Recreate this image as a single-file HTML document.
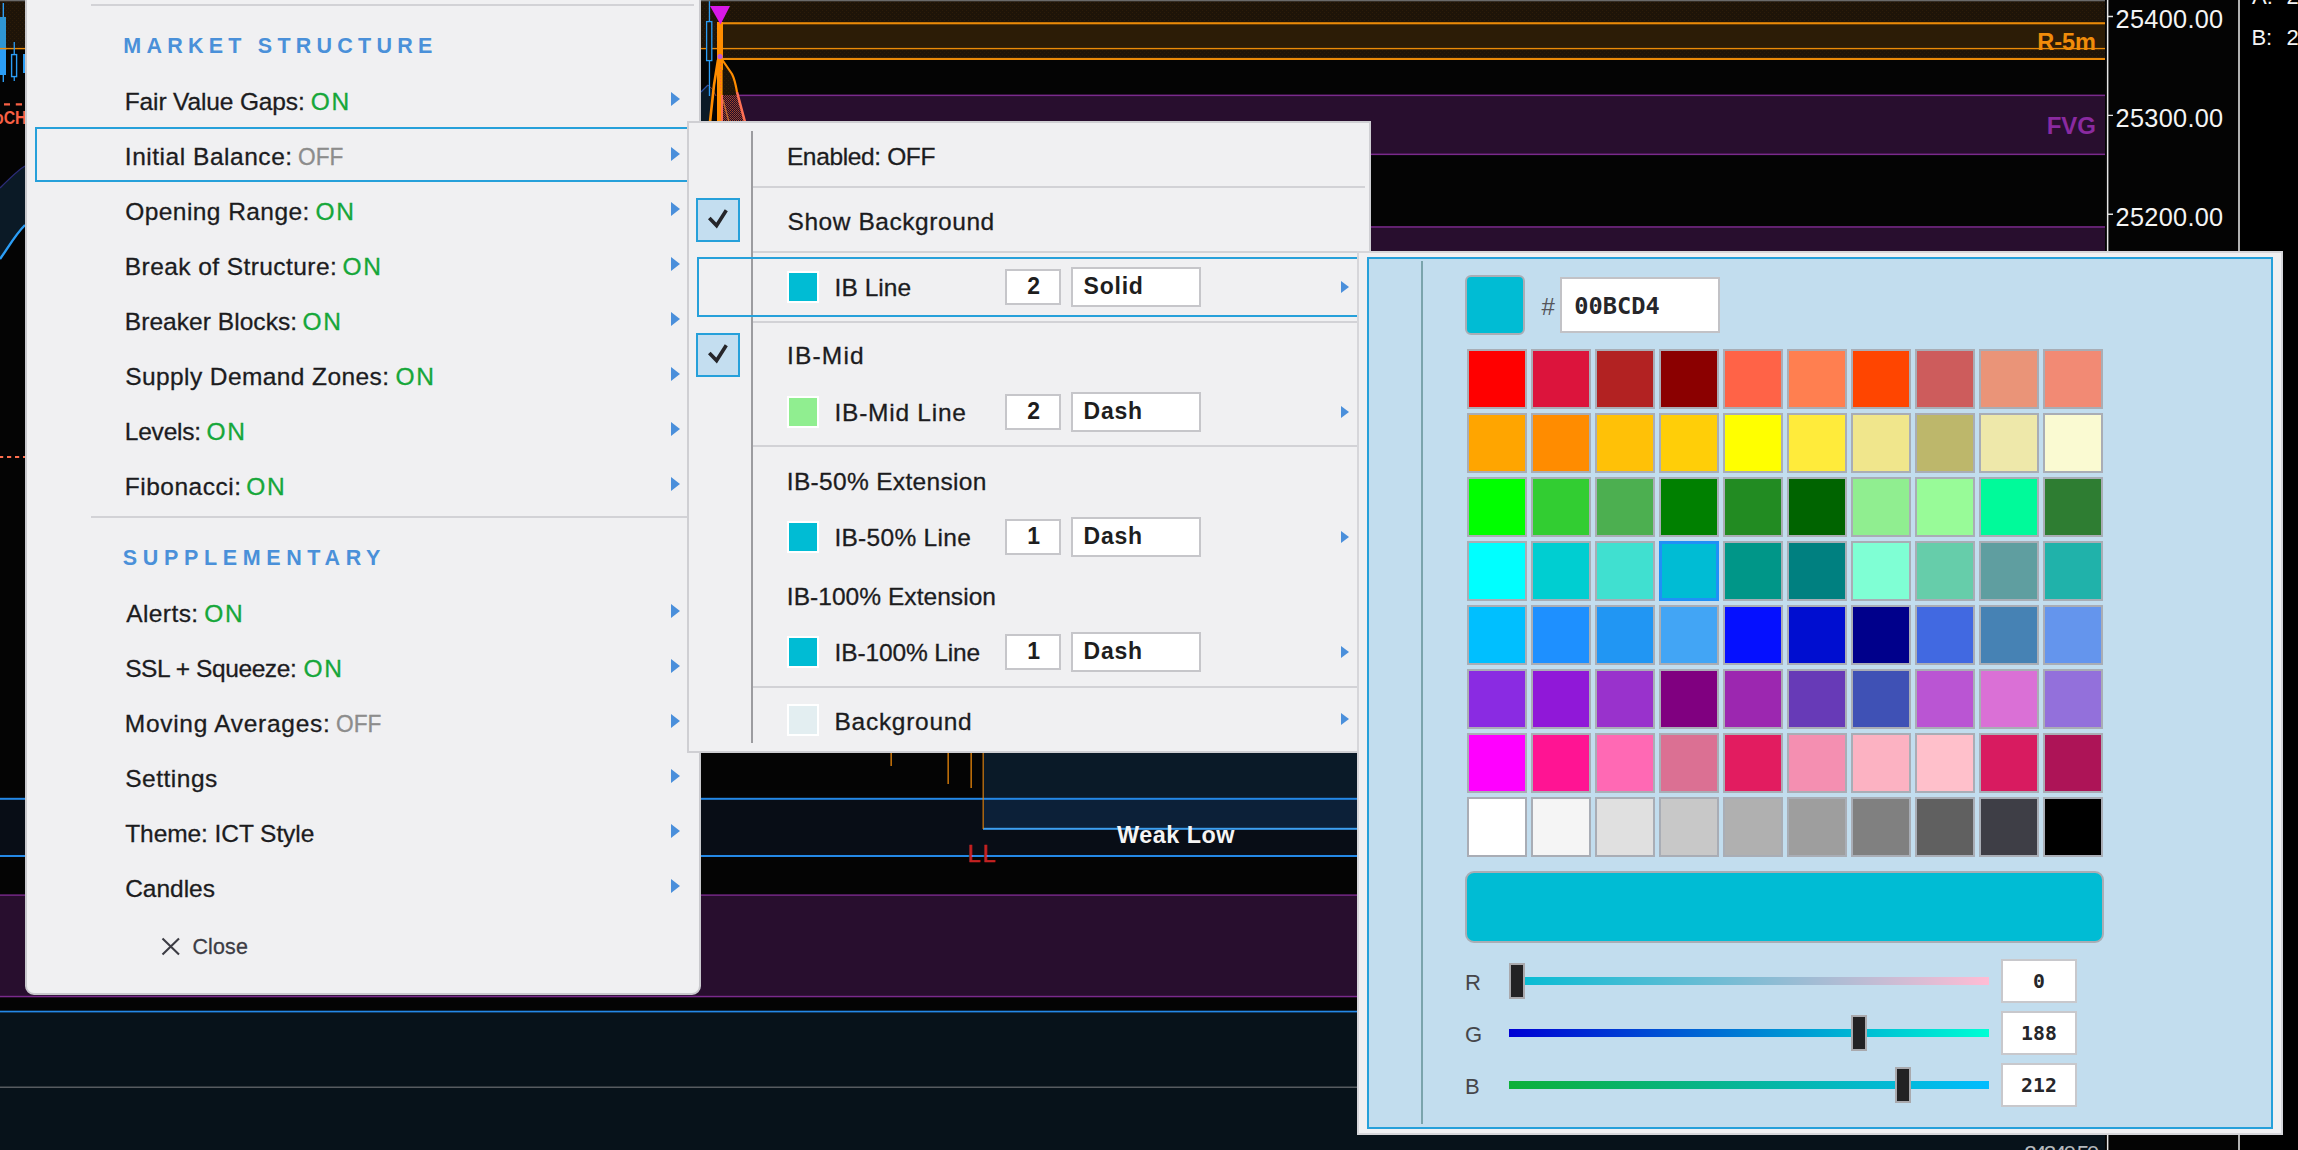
<!DOCTYPE html>
<html>
<head>
<meta charset="utf-8">
<title>Chart menu</title>
<style>
*{box-sizing:border-box;margin:0;padding:0}
html,body{width:2298px;height:1150px;overflow:hidden;background:#040404}
body{font-family:"Liberation Sans",sans-serif;color:#1e1e1e;position:relative}
.a{position:absolute}
#chart{position:absolute;left:0;top:0;width:2298px;height:1150px;background:#040404;overflow:hidden}
.hl{position:absolute;height:2px}
/* main menu */
#menu{position:absolute;left:25px;top:-20px;width:676px;height:1015px;background:#f0f0f2;border:2px solid #c9c9cd;border-radius:0 0 9px 9px}
.sep{position:absolute;height:2px;background:#d2d2d6}
.hd{position:absolute;left:123px;font-weight:bold;font-size:21.5px;letter-spacing:6.3px;color:#4a90d9;line-height:24px;white-space:nowrap}
.mi{position:absolute;left:125px;font-size:24.5px;line-height:30px;white-space:nowrap;color:#1c1c1e;-webkit-text-stroke:0.3px}
.on{color:#16a73a}
.off{color:#8c8c8c}
.ar{position:absolute;width:0;height:0;border-left:9px solid #4a8fdb;border-top:7px solid transparent;border-bottom:7px solid transparent}
.sel{position:absolute;border:2px solid #26a0da}
/* submenu */
#sub{position:absolute;left:687px;top:121px;width:684px;height:632px;background:#f0f0f2;border:2px solid #cfcfd3}
.chk{position:absolute;width:44px;height:44px;background:#c4def0;border:2px solid #26a0da}
.sw{position:absolute;width:32px;height:32px;border:2px solid #fff}
.nb{position:absolute;background:#fff;border:2px solid #c6c6ca;font-weight:bold;font-size:23px;line-height:33px;height:38px;color:#1e1e1e}
/* picker */
#pk{position:absolute;left:1357px;top:251px;width:926px;height:884px;background:#f0f0f2;border:2px solid #d6d6da}
#pki{position:absolute;left:1367px;top:257px;width:906px;height:872px;background:#c2ddee;border:2px solid #26a0da}
.c{position:absolute;width:60px;height:60px;border:2px solid #a9adb5}
.mono{font-family:"DejaVu Sans Mono","Liberation Mono",monospace;font-weight:bold}
.vb{position:absolute;background:#fff;border:2px solid #c8c8cc;text-align:center}
.th{position:absolute;width:15px;height:34px;background:#222224;border:2px solid #a9a9ad}
.tr{position:absolute;height:7px}
</style>
</head>
<body>
<div id="chart">
<!--CHART-S-->
<svg class="a" style="left:0;top:0" width="2298" height="1150" viewBox="0 0 2298 1150">
<defs>
<pattern id="dotb" width="4" height="4" patternUnits="userSpaceOnUse"><rect width="4" height="4" fill="#1e1408"/><rect x="0" y="0" width="1" height="1" fill="#2c1c09"/><rect x="2" y="2" width="1" height="1" fill="#2c1c09"/></pattern>
<pattern id="doto" width="3" height="3" patternUnits="userSpaceOnUse"><rect width="3" height="3" fill="#ff8c00"/><rect x="0" y="0" width="1" height="1" fill="#ff5a3c"/></pattern>
<pattern id="dotp" width="2" height="2" patternUnits="userSpaceOnUse"><rect width="2" height="2" fill="#1e0a2a"/><rect x="0" y="0" width="1" height="1" fill="#a2482c"/><rect x="1" y="1" width="1" height="1" fill="#8a3c2a"/></pattern>
</defs>
<!-- top brown zone -->
<rect x="0" y="0" width="2105" height="60" fill="url(#dotb)"/>
<rect x="0" y="49" width="723" height="12" fill="#040404"/>
<rect x="723" y="23" width="1382" height="25" fill="#2c1c06"/>
<rect x="723" y="22.2" width="1382" height="2.1" fill="#ea8a08"/>
<rect x="0" y="47.9" width="2105" height="1.4" fill="#ea8a08"/>
<rect x="723" y="57.9" width="1382" height="2.1" fill="#ea8a08"/>
<!-- purple FVG 1 -->
<rect x="722" y="95" width="1383" height="60" fill="#280e2e"/>
<rect x="722" y="94.6" width="1383" height="1.5" fill="#7a2a8c"/>
<rect x="700" y="153.6" width="1405" height="1.5" fill="#7a2a8c"/>
<!-- purple FVG 2 -->
<rect x="700" y="227" width="1405" height="30" fill="#280e2e"/>
<rect x="700" y="226.2" width="1405" height="1.5" fill="#7a2a8c"/>
<!-- lower area -->
<rect x="983" y="752" width="380" height="46" fill="#0a1a28"/>
<rect x="0" y="799" width="2105" height="57" fill="#080d16"/>
<rect x="983.6" y="799" width="380" height="29.5" fill="#0c2038"/>
<rect x="0" y="797.8" width="2105" height="2" fill="#2488e6"/>
<rect x="983" y="827.8" width="380" height="2" fill="#3d9ff0"/>
<rect x="0" y="855" width="2105" height="2" fill="#2488e6"/>
<rect x="982.6" y="752" width="1.1" height="77" fill="#e8860a"/>
<rect x="890.5" y="752" width="1.3" height="14" fill="#e8860a"/>
<rect x="947.5" y="752" width="1.3" height="32" fill="#e8860a"/>
<rect x="970.5" y="752" width="1.3" height="36" fill="#e8860a"/>
<!-- purple FVG 3 -->
<rect x="0" y="895" width="2105" height="101.5" fill="#280e2e"/>
<rect x="0" y="894.4" width="2105" height="1.4" fill="#7a2a8c"/>
<rect x="0" y="995.8" width="2105" height="1.5" fill="#7a2a8c"/>
<!-- bottom navy -->
<rect x="0" y="1011" width="2105" height="139" fill="#07121a"/>
<rect x="0" y="1010.7" width="2105" height="1.7" fill="#2488e6"/>
<rect x="0" y="1086.6" width="2105" height="1.2" fill="#6a6e72"/>
<!-- left strip -->
<rect x="2.6" y="3" width="1.4" height="79" fill="#2b9df5"/>
<rect x="0" y="17" width="6" height="58" fill="#2b9df5"/>
<rect x="0" y="17" width="6" height="31" fill="#2f96d4"/>
<rect x="0" y="47.9" width="7" height="1.4" fill="#ea8a08"/>
<rect x="13.6" y="42" width="1.3" height="39" fill="#2b9df5"/>
<rect x="11.6" y="54.6" width="5" height="22" fill="#040404" stroke="#2b9df5" stroke-width="1.4"/>
<rect x="23" y="54" width="3" height="19" fill="#2b9df5"/>
<path d="M0 188 C10 178 18 170 25 166 L25 225 C15 235 8 248 0 259 Z" fill="#0b1a26"/>
<path d="M0 188 C10 178 18 170 25 166" fill="none" stroke="#2c2c78" stroke-width="1.4"/>
<path d="M0 259 C8 248 15 235 25 225" fill="none" stroke="#2b9df5" stroke-width="2.4"/>
<path d="M4 104.4h6M15.8 104.4h6.2" stroke="#f86044" stroke-width="2.4"/>
<path d="M-1 457h27" stroke="#ff6e4e" stroke-width="2.2" stroke-dasharray="4.2 3.8"/>
<text x="-6" y="123.6" font-family="Liberation Sans, sans-serif" font-weight="bold" font-size="18" fill="#f86044" textLength="32.5" lengthAdjust="spacingAndGlyphs">oCH</text>
<!-- top marker near menu -->
<path d="M701 92 L708 85 L712 90 L712 122 L701 122 Z" fill="#0b1a26"/>
<path d="M701 92 L708 85" fill="none" stroke="#2a4fa0" stroke-width="1.2"/>
<path d="M708 85 Q713 88 716 96" fill="none" stroke="#7a3a4a" stroke-width="1"/>
<rect x="708.8" y="0" width="1.3" height="96" fill="#2b9df5"/>
<rect x="706.6" y="21.6" width="5.2" height="39" fill="#1a1208" stroke="#2b9df5" stroke-width="1.3"/>
<path d="M722 62 L733 76 L738 95 L722 95 Z" fill="url(#dotb)"/>
<path d="M723 95 L738 95 L745 122 L723 122 Z" fill="url(#dotp)"/>
<path d="M721 58 L732 74 Q735 80 737 92" fill="none" stroke="#ff8c00" stroke-width="2.2"/>
<path d="M737 92 L745 122" fill="none" stroke="#ff7055" stroke-width="2.6"/>
<path d="M718 60 L714 85 L710 122" fill="none" stroke="#ff8c00" stroke-width="2.6"/>
<path d="M723 100 L729 122" fill="none" stroke="#c06a30" stroke-width="1.4"/>
<rect x="717" y="22" width="6" height="48" fill="#ff8c00"/>
<rect x="717" y="70" width="4.2" height="52" fill="#ff8c00"/>
<rect x="719" y="62" width="3.6" height="33" fill="url(#doto)"/>
<rect x="721" y="95" width="2" height="27" fill="#ff7055"/>
<circle cx="720" cy="56.5" r="2.6" fill="#c05ad8"/>
<path d="M710 6 L730 6 L720.5 24.5 Z" fill="#d818e8"/>
<!-- labels -->
<text x="2096" y="50" text-anchor="end" font-family="Liberation Sans, sans-serif" font-weight="bold" font-size="23.5" fill="#f08c0a">R-5m</text>
<text x="2096" y="133.8" text-anchor="end" font-family="Liberation Sans, sans-serif" font-weight="bold" font-size="24" fill="#8a2aa0">FVG</text>
<text x="1117" y="842.6" font-family="Liberation Sans, sans-serif" font-weight="bold" font-size="23.4" fill="#f4f4f4" textLength="117.5">Weak Low</text>
<text x="967.6" y="862.4" font-family="Liberation Sans, sans-serif" font-size="23.5" fill="#c42222" stroke="#c42222" stroke-width="0.5" textLength="28">LL</text>
<!-- axis -->
<rect x="2105" y="0" width="193" height="1150" fill="#040404"/>
<rect x="2240" y="0" width="58" height="1150" fill="#000"/>
<rect x="0" y="0" width="2105" height="1.3" fill="#6a6a6a"/>
<rect x="2106.9" y="0" width="1.5" height="1150" fill="#e6e6e6"/>
<rect x="2238" y="0" width="2" height="1150" fill="#b2b2b2"/>
<path d="M2108 16.5h5M2108 115.4h5M2108 214.3h5" stroke="#e0e0e0" stroke-width="1.4"/>
<g font-family="Liberation Sans, sans-serif" font-size="25.3" fill="#f4f4f4">
<text x="2115.6" y="27.7" textLength="107.6">25400.00</text>
<text x="2115.6" y="126.6" textLength="107.6">25300.00</text>
<text x="2115.6" y="225.5" textLength="107.6">25200.00</text>
</g>
<g font-family="Liberation Sans, sans-serif" font-size="22" fill="#f4f4f4">
<text x="2252" y="4">A:</text>
<text x="2286.6" y="4">2</text>
<text x="2251.4" y="44.7">B:</text>
<text x="2286.6" y="44.7">2</text>
</g>
<text x="2024.2" y="1160.6" font-family="Liberation Sans, sans-serif" font-size="22.5" fill="#b4b8bc" textLength="75">24240.50</text>
</svg>
<!--CHART-E-->
</div>
<div id="menu"></div>
<!--MENU-S-->
<div class="sep" style="left:91px;top:4px;width:603px"></div>
<div class="hd" style="left:123.3px;top:34.2px;letter-spacing:5.23px">MARKET STRUCTURE</div>
<div class="sel" style="left:35px;top:127px;width:656px;height:55px"></div>
<div class="mi" style="left:124.8px;top:87.0px;letter-spacing:-0.14px">Fair Value Gaps:</div><div class="mi on" style="left:310.7px;top:87.0px;letter-spacing:1.70px">ON</div>
<div class="ar" style="left:670.5px;top:92.0px"></div>
<div class="mi" style="left:124.8px;top:142.0px;letter-spacing:0.53px">Initial Balance:</div><div class="mi off" style="left:297.8px;top:142.0px;transform:scaleX(0.926);transform-origin:0 0">OFF</div>
<div class="ar" style="left:670.5px;top:147.0px"></div>
<div class="mi" style="left:125.2px;top:197.0px;letter-spacing:0.44px">Opening Range:</div><div class="mi on" style="left:315.5px;top:197.0px;letter-spacing:1.70px">ON</div>
<div class="ar" style="left:670.5px;top:202.0px"></div>
<div class="mi" style="left:124.8px;top:252.0px;letter-spacing:0.43px">Break of Structure:</div><div class="mi on" style="left:342.5px;top:252.0px;letter-spacing:1.70px">ON</div>
<div class="ar" style="left:670.5px;top:257.0px"></div>
<div class="mi" style="left:124.8px;top:307.0px;letter-spacing:0.05px">Breaker Blocks:</div><div class="mi on" style="left:302.5px;top:307.0px;letter-spacing:1.70px">ON</div>
<div class="ar" style="left:670.5px;top:312.0px"></div>
<div class="mi" style="left:125.2px;top:362.0px;letter-spacing:0.41px">Supply Demand Zones:</div><div class="mi on" style="left:395.5px;top:362.0px;letter-spacing:1.70px">ON</div>
<div class="ar" style="left:670.5px;top:367.0px"></div>
<div class="mi" style="left:124.8px;top:417.0px;letter-spacing:-0.22px">Levels:</div><div class="mi on" style="left:206.5px;top:417.0px;letter-spacing:1.70px">ON</div>
<div class="ar" style="left:670.5px;top:422.0px"></div>
<div class="mi" style="left:124.8px;top:472.0px;letter-spacing:0.50px">Fibonacci:</div><div class="mi on" style="left:246.3px;top:472.0px;letter-spacing:1.70px">ON</div>
<div class="ar" style="left:670.5px;top:477.0px"></div>
<div class="sep" style="left:91px;top:516px;width:597px"></div>
<div class="hd" style="left:122.8px;top:545.8px;letter-spacing:5.64px">SUPPLEMENTARY</div>
<div class="mi" style="left:126.2px;top:599.0px;letter-spacing:0.42px">Alerts:</div><div class="mi on" style="left:204.3px;top:599.0px;letter-spacing:1.70px">ON</div>
<div class="ar" style="left:670.5px;top:604.0px"></div>
<div class="mi" style="left:125.2px;top:654.0px;letter-spacing:-0.41px">SSL + Squeeze:</div><div class="mi on" style="left:303.5px;top:654.0px;letter-spacing:1.70px">ON</div>
<div class="ar" style="left:670.5px;top:659.0px"></div>
<div class="mi" style="left:124.8px;top:709.0px;letter-spacing:0.71px">Moving Averages:</div><div class="mi off" style="left:335.6px;top:709.0px;transform:scaleX(0.926);transform-origin:0 0">OFF</div>
<div class="ar" style="left:670.5px;top:714.0px"></div>
<div class="mi" style="left:125.2px;top:764.0px;letter-spacing:0.51px">Settings</div>
<div class="ar" style="left:670.5px;top:769.0px"></div>
<div class="mi" style="left:125.2px;top:819.0px;letter-spacing:-0.07px">Theme: ICT Style</div>
<div class="ar" style="left:670.5px;top:824.0px"></div>
<div class="mi" style="left:125.2px;top:874.0px;letter-spacing:-0.02px">Candles</div>
<div class="ar" style="left:670.5px;top:879.0px"></div>
<svg class="a" style="left:160px;top:935px" width="22" height="22" viewBox="0 0 22 22"><path d="M2.5 3.5L19 19.5M19 3.5L2.5 19.5" stroke="#3c3c44" stroke-width="2.1" fill="none"/></svg>
<div class="a" style="left:192.4px;top:933px;font-size:21.4px;line-height:28px;color:#3c3c44;letter-spacing:0.2px;-webkit-text-stroke:0.3px">Close</div>
<!--MENU-E-->
<div id="sub"></div>
<!--SUB-S-->
<div class="a" style="left:751.3px;top:131px;width:1.8px;height:612px;background:#9c9ca0"></div>
<div class="sep" style="left:753px;top:186.0px;width:612px;height:2px"></div>
<div class="sep" style="left:753px;top:251.0px;width:605px;height:2px"></div>
<div class="sep" style="left:753px;top:321.0px;width:605px;height:2px"></div>
<div class="sep" style="left:753px;top:445.0px;width:605px;height:2px"></div>
<div class="sep" style="left:753px;top:686.0px;width:605px;height:2px"></div>
<div class="sel" style="left:697.2px;top:256.9px;width:670px;height:60px;border-width:2px"></div>
<div class="mi" style="font-size:24.5px;left:786.9px;top:141.6px;letter-spacing:-0.36px">Enabled: OFF</div>
<div class="mi" style="font-size:24.5px;left:787.5px;top:206.5px;letter-spacing:0.56px">Show Background</div>
<div class="mi" style="font-size:24.5px;left:834.5px;top:273.2px;letter-spacing:0.07px">IB Line</div>
<div class="mi" style="font-size:24.5px;left:786.9px;top:341.2px;letter-spacing:1.20px">IB-Mid</div>
<div class="mi" style="font-size:24.5px;left:834.5px;top:398.1px;letter-spacing:0.75px">IB-Mid Line</div>
<div class="mi" style="font-size:24.5px;left:786.8px;top:466.7px;letter-spacing:0.32px">IB-50% Extension</div>
<div class="mi" style="font-size:24.5px;left:834.4px;top:523.1px;letter-spacing:0.29px">IB-50% Line</div>
<div class="mi" style="font-size:24.5px;left:786.8px;top:581.5px;letter-spacing:0.05px">IB-100% Extension</div>
<div class="mi" style="font-size:24.5px;left:834.5px;top:638.2px;letter-spacing:-0.13px">IB-100% Line</div>
<div class="mi" style="font-size:24.5px;left:834.5px;top:706.5px;letter-spacing:0.72px">Background</div>
<div class="chk" style="left:696px;top:198.0px"></div>
<svg class="a" style="left:696px;top:198.0px" width="44" height="44" viewBox="0 0 44 44"><path d="M13.3 19.9L20.6 27.5L30.3 12.3" fill="none" stroke="#26262a" stroke-width="3.6" stroke-linejoin="miter"/></svg>
<div class="chk" style="left:696px;top:333.2px"></div>
<svg class="a" style="left:696px;top:333.2px" width="44" height="44" viewBox="0 0 44 44"><path d="M13.3 19.9L20.6 27.5L30.3 12.3" fill="none" stroke="#26262a" stroke-width="3.6" stroke-linejoin="miter"/></svg>
<div class="sw" style="left:786.8px;top:271.0px;background:#00bcd4"></div>
<div class="nb" style="left:1005px;top:269.0px;width:56px;height:36px;line-height:31.6px;text-align:center;padding-left:1.5px">2</div>
<div class="nb" style="left:1071px;top:267.0px;width:130px;height:39.5px;line-height:35.5px;padding-left:10.5px;letter-spacing:0.8px">Solid</div>
<div class="ar" style="left:1341px;top:280.5px;border-left-width:8.5px;border-top-width:6.5px;border-bottom-width:6.5px"></div>
<div class="sw" style="left:786.8px;top:396.0px;background:#90ee90"></div>
<div class="nb" style="left:1005px;top:394.0px;width:56px;height:36px;line-height:31.6px;text-align:center;padding-left:1.5px">2</div>
<div class="nb" style="left:1071px;top:392.0px;width:130px;height:39.5px;line-height:35.5px;padding-left:10.5px;letter-spacing:0.8px">Dash</div>
<div class="ar" style="left:1341px;top:405.5px;border-left-width:8.5px;border-top-width:6.5px;border-bottom-width:6.5px"></div>
<div class="sw" style="left:786.8px;top:521.0px;background:#00bcd4"></div>
<div class="nb" style="left:1005px;top:519.0px;width:56px;height:36px;line-height:31.6px;text-align:center;padding-left:1.5px">1</div>
<div class="nb" style="left:1071px;top:517.0px;width:130px;height:39.5px;line-height:35.5px;padding-left:10.5px;letter-spacing:0.8px">Dash</div>
<div class="ar" style="left:1341px;top:530.5px;border-left-width:8.5px;border-top-width:6.5px;border-bottom-width:6.5px"></div>
<div class="sw" style="left:786.8px;top:636.0px;background:#00bcd4"></div>
<div class="nb" style="left:1005px;top:634.0px;width:56px;height:36px;line-height:31.6px;text-align:center;padding-left:1.5px">1</div>
<div class="nb" style="left:1071px;top:632.0px;width:130px;height:39.5px;line-height:35.5px;padding-left:10.5px;letter-spacing:0.8px">Dash</div>
<div class="ar" style="left:1341px;top:645.5px;border-left-width:8.5px;border-top-width:6.5px;border-bottom-width:6.5px"></div>
<div class="sw" style="left:786.8px;top:704.2px;background:#e3eef1"></div>
<div class="ar" style="left:1341px;top:712.5px;border-left-width:8.5px;border-top-width:6.5px;border-bottom-width:6.5px"></div>
<!--SUB-E-->
<div id="pk"></div>
<div id="pki"></div>
<!--PICKER-S-->
<div class="a" style="left:1421.2px;top:261px;width:1.5px;height:863px;background:#7aa4ac"></div>
<div class="a" style="left:1465px;top:275px;width:60px;height:60px;background:#00bcd4;border:2px solid #a9adb5;border-radius:6px"></div>
<div class="a" style="left:1541.5px;top:292.5px;font-size:24px;line-height:28px;color:#55555a">#</div>
<div class="a mono" style="left:1560px;top:277.2px;width:159.5px;height:55.5px;background:#fff;border:2px solid #c2c2c6;font-size:23.7px;line-height:55.4px;padding-left:12.2px;color:#26262a">00BCD4</div>
<div class="c" style="left:1467px;top:349px;background:#ff0000"></div>
<div class="c" style="left:1531px;top:349px;background:#dc143c"></div>
<div class="c" style="left:1595px;top:349px;background:#b22222"></div>
<div class="c" style="left:1659px;top:349px;background:#8b0000"></div>
<div class="c" style="left:1723px;top:349px;background:#ff6347"></div>
<div class="c" style="left:1787px;top:349px;background:#ff7f50"></div>
<div class="c" style="left:1851px;top:349px;background:#ff4500"></div>
<div class="c" style="left:1915px;top:349px;background:#cd5c5c"></div>
<div class="c" style="left:1979px;top:349px;background:#ea9478"></div>
<div class="c" style="left:2043px;top:349px;background:#f28a74"></div>
<div class="c" style="left:1467px;top:413px;background:#ffa500"></div>
<div class="c" style="left:1531px;top:413px;background:#ff8c00"></div>
<div class="c" style="left:1595px;top:413px;background:#ffc107"></div>
<div class="c" style="left:1659px;top:413px;background:#ffce08"></div>
<div class="c" style="left:1723px;top:413px;background:#ffff00"></div>
<div class="c" style="left:1787px;top:413px;background:#ffeb3b"></div>
<div class="c" style="left:1851px;top:413px;background:#f0e68c"></div>
<div class="c" style="left:1915px;top:413px;background:#bdb76b"></div>
<div class="c" style="left:1979px;top:413px;background:#eee8aa"></div>
<div class="c" style="left:2043px;top:413px;background:#fafad2"></div>
<div class="c" style="left:1467px;top:477px;background:#00ff00"></div>
<div class="c" style="left:1531px;top:477px;background:#32cd32"></div>
<div class="c" style="left:1595px;top:477px;background:#4caf50"></div>
<div class="c" style="left:1659px;top:477px;background:#008000"></div>
<div class="c" style="left:1723px;top:477px;background:#228b22"></div>
<div class="c" style="left:1787px;top:477px;background:#006400"></div>
<div class="c" style="left:1851px;top:477px;background:#90ee90"></div>
<div class="c" style="left:1915px;top:477px;background:#98fb98"></div>
<div class="c" style="left:1979px;top:477px;background:#00fa9a"></div>
<div class="c" style="left:2043px;top:477px;background:#2e7d32"></div>
<div class="c" style="left:1467px;top:541px;background:#00ffff"></div>
<div class="c" style="left:1531px;top:541px;background:#00ced1"></div>
<div class="c" style="left:1595px;top:541px;background:#40e0d0"></div>
<div class="c" style="left:1659px;top:541px;background:#00bcd4;border:3px solid #2090f6"></div>
<div class="c" style="left:1723px;top:541px;background:#009688"></div>
<div class="c" style="left:1787px;top:541px;background:#008080"></div>
<div class="c" style="left:1851px;top:541px;background:#7fffd4"></div>
<div class="c" style="left:1915px;top:541px;background:#66cdaa"></div>
<div class="c" style="left:1979px;top:541px;background:#5f9ea0"></div>
<div class="c" style="left:2043px;top:541px;background:#20b2aa"></div>
<div class="c" style="left:1467px;top:605px;background:#00bfff"></div>
<div class="c" style="left:1531px;top:605px;background:#1e90ff"></div>
<div class="c" style="left:1595px;top:605px;background:#2196f3"></div>
<div class="c" style="left:1659px;top:605px;background:#42a5f5"></div>
<div class="c" style="left:1723px;top:605px;background:#0510ff"></div>
<div class="c" style="left:1787px;top:605px;background:#000ed0"></div>
<div class="c" style="left:1851px;top:605px;background:#00008b"></div>
<div class="c" style="left:1915px;top:605px;background:#4169e1"></div>
<div class="c" style="left:1979px;top:605px;background:#4682b4"></div>
<div class="c" style="left:2043px;top:605px;background:#6495ed"></div>
<div class="c" style="left:1467px;top:669px;background:#8a2be2"></div>
<div class="c" style="left:1531px;top:669px;background:#9018d8"></div>
<div class="c" style="left:1595px;top:669px;background:#9932cc"></div>
<div class="c" style="left:1659px;top:669px;background:#800080"></div>
<div class="c" style="left:1723px;top:669px;background:#9c27b0"></div>
<div class="c" style="left:1787px;top:669px;background:#673ab7"></div>
<div class="c" style="left:1851px;top:669px;background:#3f51b5"></div>
<div class="c" style="left:1915px;top:669px;background:#ba55d3"></div>
<div class="c" style="left:1979px;top:669px;background:#da70d6"></div>
<div class="c" style="left:2043px;top:669px;background:#9370db"></div>
<div class="c" style="left:1467px;top:733px;background:#ff00ff"></div>
<div class="c" style="left:1531px;top:733px;background:#ff1493"></div>
<div class="c" style="left:1595px;top:733px;background:#ff69b4"></div>
<div class="c" style="left:1659px;top:733px;background:#db7093"></div>
<div class="c" style="left:1723px;top:733px;background:#e21c60"></div>
<div class="c" style="left:1787px;top:733px;background:#f48fb1"></div>
<div class="c" style="left:1851px;top:733px;background:#fcb2c2"></div>
<div class="c" style="left:1915px;top:733px;background:#ffc0cb"></div>
<div class="c" style="left:1979px;top:733px;background:#d81b60"></div>
<div class="c" style="left:2043px;top:733px;background:#ad1457"></div>
<div class="c" style="left:1467px;top:797px;background:#ffffff"></div>
<div class="c" style="left:1531px;top:797px;background:#f5f5f5"></div>
<div class="c" style="left:1595px;top:797px;background:#e0e0e0"></div>
<div class="c" style="left:1659px;top:797px;background:#c8c8c8"></div>
<div class="c" style="left:1723px;top:797px;background:#b0b0b0"></div>
<div class="c" style="left:1787px;top:797px;background:#9e9e9e"></div>
<div class="c" style="left:1851px;top:797px;background:#808080"></div>
<div class="c" style="left:1915px;top:797px;background:#606060"></div>
<div class="c" style="left:1979px;top:797px;background:#3e3e46"></div>
<div class="c" style="left:2043px;top:797px;background:#000000"></div>
<div class="a" style="left:1465px;top:871px;width:639px;height:72px;background:#00bcd4;border:2px solid #a9adb5;border-radius:9px"></div>
<div class="a" style="left:1465px;top:968.6px;font-size:22px;line-height:28px;color:#46464a">R</div>
<div class="tr" style="left:1509px;top:977.0px;width:480px;height:8px;background:linear-gradient(90deg,#00bcd4,#ffbcd4)"></div>
<div class="th" style="left:1509.0px;top:963.1px;width:16px;height:35.6px"></div>
<div class="vb mono" style="left:2001.2px;top:959.2px;width:75.5px;height:43.5px;font-size:19.8px;line-height:42.5px;color:#26262a">0</div>
<div class="a" style="left:1465px;top:1020.6px;font-size:22px;line-height:28px;color:#46464a">G</div>
<div class="tr" style="left:1509px;top:1029.0px;width:480px;height:8px;background:linear-gradient(90deg,#0000d4,#00ffd4)"></div>
<div class="th" style="left:1851.1px;top:1015.1px;width:16px;height:35.6px"></div>
<div class="vb mono" style="left:2001.2px;top:1011.2px;width:75.5px;height:43.5px;font-size:19.8px;line-height:42.5px;color:#26262a">188</div>
<div class="a" style="left:1465px;top:1072.6px;font-size:22px;line-height:28px;color:#46464a">B</div>
<div class="tr" style="left:1509px;top:1081.0px;width:480px;height:8px;background:linear-gradient(90deg,#0cb038,#00bcff)"></div>
<div class="th" style="left:1894.8px;top:1067.1px;width:16px;height:35.6px"></div>
<div class="vb mono" style="left:2001.2px;top:1063.2px;width:75.5px;height:43.5px;font-size:19.8px;line-height:42.5px;color:#26262a">212</div>
<!--PICKER-E-->
</body>
</html>
